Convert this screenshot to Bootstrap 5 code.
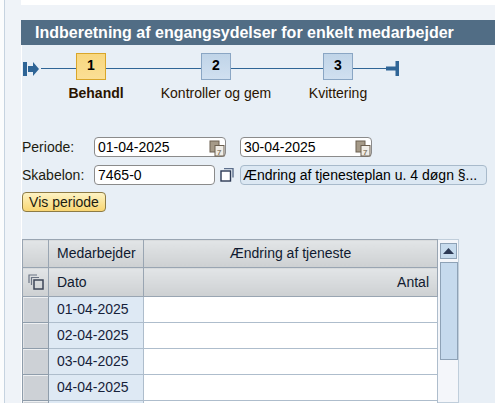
<!DOCTYPE html>
<html lang="da">
<head>
<meta charset="utf-8">
<title>Indberetning</title>
<link href="https://cdn.jsdelivr.net/npm/bootstrap@5.3.0/dist/css/bootstrap.min.css" rel="stylesheet">
<style>
html,body{height:403px;overflow:hidden}
body{font-family:"Liberation Sans",Arial,sans-serif;font-size:14px;color:#000;background:#eff3f8;line-height:1.2}
.edge{width:4px;flex:none;background:#fbfcfd}
.rail{width:17px;flex:none;background:#eff3f8;border-left:1px solid #c6d3e0}
.mainc{min-width:0;flex:1;height:403px;overflow:hidden}
.topw{height:5px;background:#fff}
.topg{height:15px;background:#eff3f8}
.hdr{height:25px;background:#516d85;color:#fff;font-weight:700;font-size:16px;line-height:25px;padding-left:14px;white-space:nowrap}
.bodyc{background:#e8eff6;border-left:1px solid #fff;height:358px;overflow:hidden}
.road{height:35px;margin-top:8px}
.ln{height:1px;background:#2f6596;flex:none;margin-top:15px}
.stp{width:30px;height:27px;flex:none;border:1px solid #8aa6c4;background:linear-gradient(#c0d4e8,#d0e0f0);font-weight:700;text-align:center;line-height:23px;font-size:14px}
.stp.on{border-color:#d9a62a;background:linear-gradient(#f8d77f,#fbdf95)}
.lbls{height:20px;margin-top:-5px;color:#2a1400}
.lb{width:0;display:flex;justify-content:center;white-space:nowrap;flex:none;line-height:20px}
.flbl{width:72px;flex:none;color:#1c1c10}
.inp{height:20px;border:1px solid #8b8b8b;border-radius:4px;background:#fff;padding:0 3px;line-height:19px;display:flex;align-items:center;justify-content:space-between;flex:none;font-size:14px}
.inp svg{flex:none;margin-top:2px}
.rof{height:20px;border:1px solid #a8bacb;border-radius:4px;background:#dce8f3;padding:0 2px;line-height:19px;width:247px;white-space:nowrap;overflow:hidden;flex:none;margin-left:6px}
.vbtn{display:block;height:20px;width:84px;padding:0;border:1px solid #8d7b45;border-radius:4px;background:linear-gradient(#fdf3c4,#f9d672);font-size:14px;line-height:17px;color:#1c1c10;text-align:center}
.tblw{margin-top:27px;height:164px;overflow:hidden}
.tb{border-collapse:collapse;table-layout:fixed;width:416px;flex:none}
.tb th,.tb td{padding:0 8px;font-weight:400;border:1px solid #9fb0c1;vertical-align:middle;font-size:14px;color:#16213a}
.tb thead th{background:linear-gradient(#e2e5e7,#cdd0d2);border-color:#99a5b2;color:#101a30}
.tb .r1{height:28px}.tb .r2{height:29px}
.tb tbody tr{height:26px}
.tb tbody td{border-color:#aebdcc}
.tb td.sel{padding:0;background:#cdd1d6;box-shadow:inset 0 1px 0 #eef0f2,inset 1px 0 0 #e2e4e7;border-color:#8f9dab}
.tb td.dt{background:#dee9f4}
.tb td.vl{background:#fff}
.sbar{width:21px;height:164px;flex:none;background:#f4f6fa;border:1px solid #c0cedb;border-left:none;padding:3px 2px 2px 2px}
.sup{height:16px;width:17px;background:#c7dbed;border:1px solid #8ea2b6;display:flex;align-items:center;justify-content:center}
.sth{height:98px;width:18px;margin-top:3px;background:#c6daed;border:1px solid #8ea2b6}
</style>
</head>
<body>
<div class="d-flex">
  <div class="edge"></div>
  <div class="rail"></div>
  <div class="mainc">
    <div class="topw"></div>
    <div class="topg"></div>
    <div class="hdr">Indberetning af engangsydelser for enkelt medarbejder</div>
    <div class="bodyc">
      <div class="road d-flex align-items-start">
        <svg width="19" height="16" viewBox="0 0 19 16" style="margin-top:8px;flex:none"><rect x="1" y="1" width="4" height="14" fill="#2f6596"/><path d="M6 5h5V1l6 7-6 7v-4H6z" fill="#2f6596"/></svg>
        <div class="ln" style="width:35px"></div>
        <div class="stp on">1</div>
        <div class="ln" style="width:95px"></div>
        <div class="stp">2</div>
        <div class="ln" style="width:92px"></div>
        <div class="stp">3</div>
        <div class="ln" style="width:33px"></div>
        <svg width="14" height="16" viewBox="0 0 14 16" style="margin-top:8px;flex:none"><rect x="0" y="5.5" width="10" height="4" fill="#2f6596"/><rect x="9.5" y="0" width="3.5" height="15" fill="#2f6596"/></svg>
      </div>
      <div class="lbls d-flex">
        <div class="lb fw-bold" style="margin-left:74px">Behandl</div>
        <div class="lb" style="margin-left:120px">Kontroller og gem</div>
        <div class="lb" style="margin-left:122px">Kvittering</div>
      </div>
      <div class="d-flex align-items-center" style="margin-top:34px">
        <div class="flbl">Periode:</div>
        <div class="inp" style="width:132px;padding-right:0">01-04-2025
          <svg width="16" height="17" viewBox="0 0 16 17"><rect x="1" y="1" width="9" height="11" fill="#a59a88" stroke="#6c6050"/><rect x="6" y="5.5" width="9" height="10.5" fill="#efece6" stroke="#6c6050"/><text x="8" y="14.5" font-size="8" font-weight="700" fill="#8a7c68" font-family="Liberation Sans">7</text></svg>
        </div>
        <div class="inp" style="width:132px;margin-left:14px;padding-right:0">30-04-2025
          <svg width="16" height="17" viewBox="0 0 16 17"><rect x="1" y="1" width="9" height="11" fill="#a59a88" stroke="#6c6050"/><rect x="6" y="5.5" width="9" height="10.5" fill="#efece6" stroke="#6c6050"/><text x="8" y="14.5" font-size="8" font-weight="700" fill="#8a7c68" font-family="Liberation Sans">7</text></svg>
        </div>
      </div>
      <div class="d-flex align-items-center" style="margin-top:8px">
        <div class="flbl">Skabelon:</div>
        <div class="inp" style="width:121px">7465-0</div>
        <svg width="14" height="14" viewBox="0 0 14 14" style="margin-left:5px;flex:none"><path d="M4 .5h9v9" fill="none" stroke="#5d6f8c" stroke-width="1.4"/><rect x="1" y="3" width="9.5" height="10" fill="#fff" stroke="#2d3a55" stroke-width="1.4"/></svg>
        <div class="rof">Ændring af tjenesteplan u. 4 døgn §...</div>
      </div>
      <button type="button" class="btn vbtn" style="margin-top:7px">Vis periode</button>
      <div class="tblw d-flex align-items-start">
        <table class="tb">
          <colgroup><col style="width:26px"><col style="width:95px"><col></colgroup>
          <thead>
            <tr class="r1"><th></th><th>Medarbejder</th><th class="text-center">Ændring af tjeneste</th></tr>
            <tr class="r2"><th class="p-0 text-center"><svg width="16" height="16" viewBox="0 0 16 16" class="d-block mx-auto"><path d="M1 9V1h8M3.500 11V3.500h7.500" fill="none" stroke="#6b7484" stroke-width="1.2"/><rect x="6" y="6" width="9" height="9" fill="none" stroke="#3c4658" stroke-width="1.5"/></svg></th><th>Dato</th><th class="text-end">Antal</th></tr>
          </thead>
          <tbody>
            <tr><td class="sel"></td><td class="dt">01-04-2025</td><td class="vl"></td></tr>
            <tr><td class="sel"></td><td class="dt">02-04-2025</td><td class="vl"></td></tr>
            <tr><td class="sel"></td><td class="dt">03-04-2025</td><td class="vl"></td></tr>
            <tr><td class="sel"></td><td class="dt">04-04-2025</td><td class="vl"></td></tr>
            <tr><td class="sel"></td><td class="dt"></td><td class="vl"></td></tr>
          </tbody>
        </table>
        <div class="sbar">
          <div class="sup"><svg width="11" height="6" viewBox="0 0 11 6"><path d="M5.5 0L11 6H0z" fill="#2d3a55"/></svg></div>
          <div class="sth"></div>
        </div>
      </div>
    </div>
  </div>
</div>
<script src="https://cdn.jsdelivr.net/npm/bootstrap@5.3.0/dist/js/bootstrap.bundle.min.js"></script>
</body>
</html>
